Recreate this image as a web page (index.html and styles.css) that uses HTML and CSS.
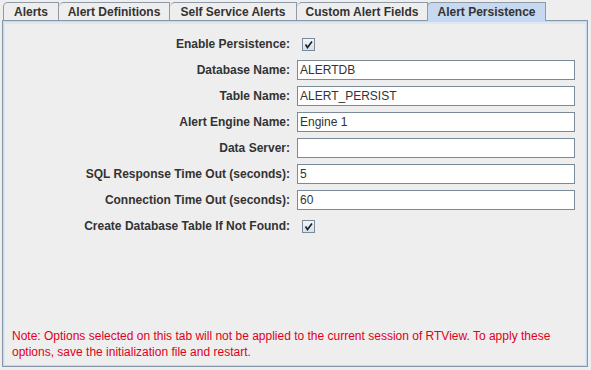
FILE: index.html
```html
<!DOCTYPE html>
<html lang="en">
<head>
  <meta charset="UTF-8">
  <title>Alert Persistence</title>
  <link rel="stylesheet" href="styles.css">
</head>
<body>
  <ul class="tabs">
    <li class="tab tab-alerts">Alerts</li>
    <li class="tab tab-defs">Alert Definitions</li>
    <li class="tab tab-self">Self Service Alerts</li>
    <li class="tab tab-custom">Custom Alert Fields</li>
    <li class="tab tab-persist active">Alert Persistence</li>
  </ul>
  <section class="panel">
    <div class="form">
      <label>Enable Persistence:</label>
      <div class="cell"><span class="check"><svg width="9" height="9" viewBox="0 0 9 9"><path d="M1.5 4.5 L3.5 7.5 L8 1.5" fill="none" stroke="#222" stroke-width="1.7"/></svg></span></div>

      <label>Database Name:</label>
      <div class="field">ALERTDB</div>

      <label>Table Name:</label>
      <div class="field">ALERT_PERSIST</div>

      <label>Alert Engine Name:</label>
      <div class="field">Engine 1</div>

      <label>Data Server:</label>
      <div class="field"></div>

      <label>SQL Response Time Out (seconds):</label>
      <div class="field">5</div>

      <label>Connection Time Out (seconds):</label>
      <div class="field">60</div>

      <label>Create Database Table If Not Found:</label>
      <div class="cell"><span class="check"><svg width="9" height="9" viewBox="0 0 9 9"><path d="M1.5 4.5 L3.5 7.5 L8 1.5" fill="none" stroke="#222" stroke-width="1.7"/></svg></span></div>
    </div>
    <p class="note">Note: Options selected on this tab will not be applied to the current session of RTView. To apply these options, save the initialization file and restart.</p>
  </section>
</body>
</html>
```

FILE: styles.css
```css
html, body { margin:0;padding:0;height:100%;overflow:hidden }
body { background:#eeeeee;color:#333;font:12px "Liberation Sans", Arial, sans-serif;display:flex;flex-direction:column }

.tabs { list-style:none;margin:2px 0 0 3px;padding:0;display:flex;height:18px;position:relative;z-index:1 }
.tab { border:1px solid #8e9aa6;border-bottom:none;border-left:none;border-top-left-radius:5px;padding:0;text-align:center;font-weight:bold;line-height:18px;background:#eeeeee;height:18px;box-sizing:border-box;color:#333;white-space:nowrap }
.tab:first-child { border-left:1px solid #8e9aa6 }
.tab-alerts { width:56px }
.tab-defs { width:111px }
.tab-self { width:127px }
.tab-custom { width:131px }
.tab-persist { width:119px }
.tab.active { background:#c6d9f0;height:19px;border-left:1px solid #8e9aa6;margin-left:-1px }

.panel { flex:1;margin:0 3px 3px 2px;border:1px solid #8797a8;box-shadow:inset 0 0 0 1px #c6d9f0, inset 0 1px 0 2px #dde8f4;display:flex;flex-direction:column;padding:13px 12px 6px 9px }

.form { display:grid;grid-template-columns:1fr 278px;column-gap:7px;row-gap:6px;grid-auto-rows:20px }
.form label { font-weight:bold;text-align:right;line-height:20px;color:#333 }
.cell { display:flex;align-items:center;padding-left:5px }
.check { width:11px;height:11px;border:1px solid #7a8a99;background:linear-gradient(#f2f6fb,#d4e0ee);display:flex;align-items:center;justify-content:center }
.field { background:#fff;border:1px solid #7a8a99;box-sizing:border-box;height:20px;line-height:18px;padding-left:2px;color:#333 }

.note { margin:auto 0 0;color:#e00020;line-height:16px }
```
